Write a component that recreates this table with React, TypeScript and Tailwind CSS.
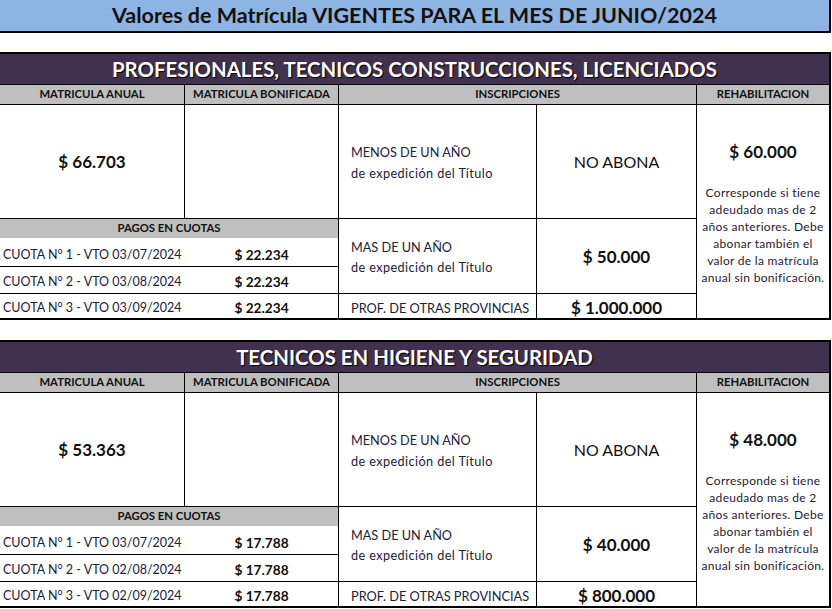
type Cuota = { label: string; amount: string };

type Section = {
  title: string;
  anual: string;
  cuotas: Cuota[];
  mas: string;
  otras: string;
  rehab: string;
};

const sections: Section[] = [
  {
    title: "PROFESIONALES, TECNICOS CONSTRUCCIONES, LICENCIADOS",
    anual: "$ 66.703",
    cuotas: [
      { label: "CUOTA N° 1 - VTO 03/07/2024", amount: "$ 22.234" },
      { label: "CUOTA N° 2 - VTO 03/08/2024", amount: "$ 22.234" },
      { label: "CUOTA N° 3 - VTO 03/09/2024", amount: "$ 22.234" },
    ],
    mas: "$ 50.000",
    otras: "$ 1.000.000",
    rehab: "$ 60.000",
  },
  {
    title: "TECNICOS EN HIGIENE Y SEGURIDAD",
    anual: "$ 53.363",
    cuotas: [
      { label: "CUOTA N° 1 - VTO 03/07/2024", amount: "$ 17.788" },
      { label: "CUOTA N° 2 - VTO 02/08/2024", amount: "$ 17.788" },
      { label: "CUOTA N° 3 - VTO 02/09/2024", amount: "$ 17.788" },
    ],
    mas: "$ 40.000",
    otras: "$ 800.000",
    rehab: "$ 48.000",
  },
];

const cuotaRows = ["h-[29px] border-b pt-[5px]", "h-[27px] border-b pt-[4px]", "h-[24px] pt-[3px]"];

function Tabla({ s }: { s: Section }) {
  return (
    <div className="w-[831px] overflow-hidden border-y-2 border-r-2 border-black">
      {/* titulo */}
      <div className="flex h-[31px] items-center justify-center border-b border-black bg-[#403151] text-[20.4px] font-bold text-white [text-shadow:1px_1px_1px_#000]">
        {s.title}
      </div>

      {/* encabezados */}
      <div className="grid h-[20px] grid-cols-[185px_154px_358px_1fr] border-b border-black bg-[#bfbfbf] text-[11.3px] font-bold text-[#111]">
        <div className="flex items-center justify-center border-r border-black">MATRICULA ANUAL</div>
        <div className="flex items-center justify-center border-r border-black">MATRICULA BONIFICADA</div>
        <div className="flex items-center justify-center border-r border-black">INSCRIPCIONES</div>
        <div className="flex items-center justify-center">REHABILITACION</div>
      </div>

      <div className="grid grid-cols-[339px_358px_1fr] text-[#1b2236]">
        {/* matricula + cuotas */}
        <div className="border-r border-black">
          <div className="grid h-[114px] grid-cols-[185px_1fr] border-b border-black">
            <div className="flex items-center justify-center border-r border-black text-[17px] font-bold text-[#111]">
              {s.anual}
            </div>
            <div />
          </div>
          <div className="flex h-[19px] items-center justify-center bg-[#bfbfbf] text-[11.3px] font-bold text-[#111]">
            PAGOS EN CUOTAS
          </div>
          {s.cuotas.map((c, i) => (
            <div key={i} className={`grid grid-cols-[185px_1fr] items-center border-black leading-[16px] ${cuotaRows[i]}`}>
              <span className="whitespace-nowrap pl-[3px] text-[12.5px]">{c.label}</span>
              <span className="text-center text-[13.7px] font-bold text-[#111]">{c.amount}</span>
            </div>
          ))}
        </div>

        {/* inscripciones */}
        <div className="border-r border-black">
          <div className="grid h-[114px] grid-cols-[198px_1fr] border-b border-black">
            <div className="flex flex-col justify-center border-r border-black pl-[12px] pt-[2px] text-[12.7px] leading-[21px]">
              <span>MENOS DE UN AÑO</span>
              <span className="tracking-[0.4px]">de expedición del Título</span>
            </div>
            <div className="flex items-center justify-center text-[16px] text-[#111]">NO ABONA</div>
          </div>
          <div className="grid h-[75px] grid-cols-[198px_1fr] border-b border-black">
            <div className="flex flex-col justify-center border-r border-black pl-[12px] pt-[2px] text-[12.7px] leading-[20px]">
              <span>MAS DE UN AÑO</span>
              <span className="tracking-[0.4px]">de expedición del Título</span>
            </div>
            <div className="flex items-center justify-center pt-[2px] text-[17px] font-bold text-[#111]">{s.mas}</div>
          </div>
          <div className="grid h-[24px] grid-cols-[198px_1fr] leading-[18px]">
            <div className="flex items-center whitespace-nowrap border-r border-black pl-[12px] pt-[3px] text-[12.8px]">
              PROF. DE OTRAS PROVINCIAS
            </div>
            <div className="flex items-center justify-center pt-[3px] text-[17px] font-bold text-[#111]">{s.otras}</div>
          </div>
        </div>

        {/* rehabilitacion */}
        <div className="flex flex-col items-center pt-[36px] text-center">
          <span className="text-[17px] font-bold leading-[22px] text-[#111]">{s.rehab}</span>
          <p className="mt-[21px] whitespace-nowrap text-[12px] leading-[17px] tracking-[0.3px] text-[#1f1a30]">
            Corresponde si tiene
            <br />
            adeudado mas de 2
            <br />
            años anteriores. Debe
            <br />
            abonar también el
            <br />
            valor de la matrícula
            <br />
            anual sin bonificación.
          </p>
        </div>
      </div>
    </div>
  );
}

export default function App() {
  return (
    <div className="min-h-screen w-[832px] bg-white font-['Lato',sans-serif]">
      <div className="flex h-[33px] w-[831px] items-center justify-center border-b-2 border-r-2 border-black bg-[#8db4e2] text-[21.5px] font-bold text-[#111]">
        Valores de Matrícula VIGENTES PARA EL MES DE JUNIO/2024
      </div>
      <div className="mt-[19px] flex flex-col gap-[20px]">
        {sections.map((s, i) => (
          <Tabla key={i} s={s} />
        ))}
      </div>
    </div>
  );
}
